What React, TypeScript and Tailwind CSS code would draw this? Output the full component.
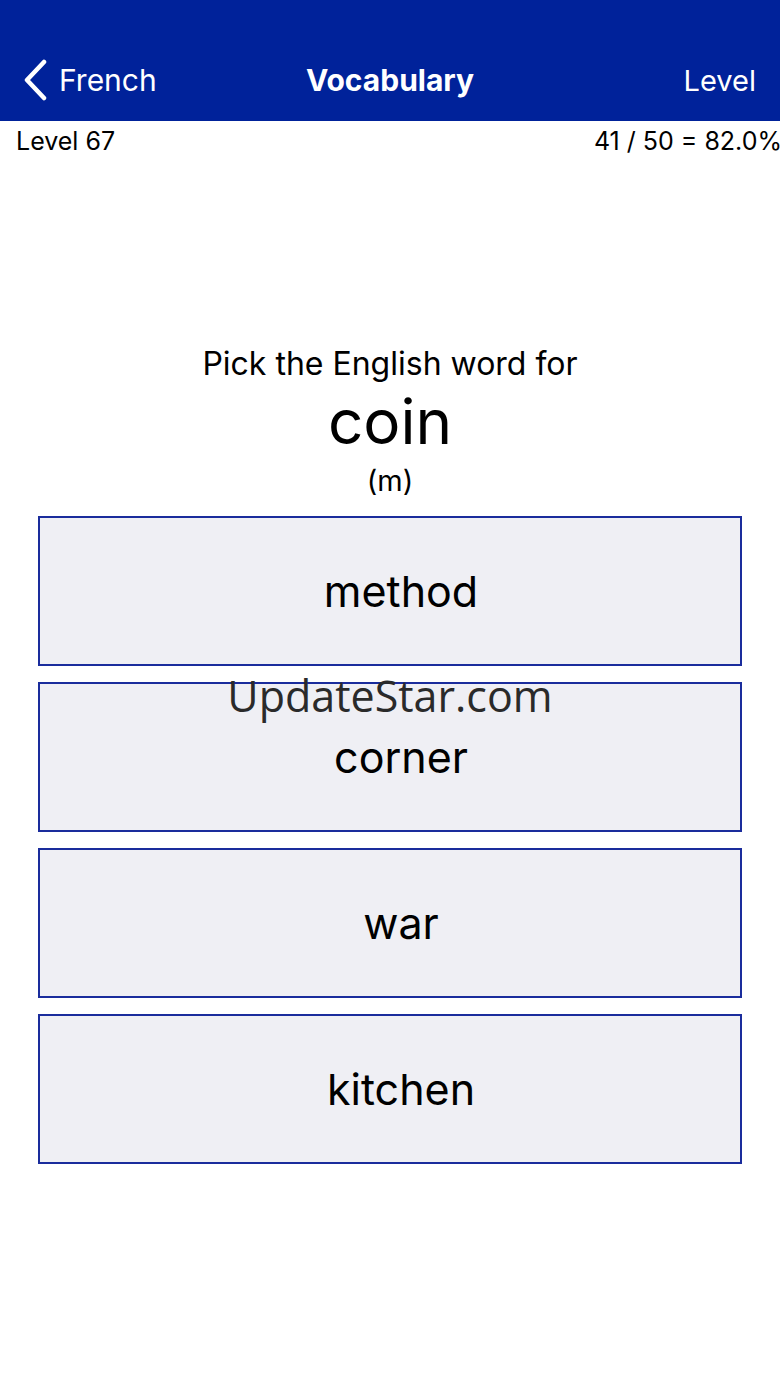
const options = ["method", "corner", "war", "kitchen"];

const App = () => {
  return (
    <div
      className="relative min-h-[1387px] w-[780px] bg-white text-black"
      style={{ fontFamily: "Inter, Roboto, 'Liberation Sans', sans-serif" }}
    >
      {/* nav bar */}
      <div className="flex h-[121px] items-start bg-[#00229a] pt-[59px] text-white">
        <div className="flex h-[42px] w-[260px] items-center pl-[22px]">
          <svg width="28" height="42" viewBox="0 0 28 42" fill="none">
            <polyline
              points="22,3 5,21 22,39"
              stroke="white"
              strokeWidth="4.5"
              strokeLinecap="round"
              strokeLinejoin="round"
            />
          </svg>
          <span className="ml-[9px] text-[30px] leading-none">French</span>
        </div>
        <div className="flex h-[42px] flex-1 items-center justify-center text-[30px] font-bold leading-none">
          Vocabulary
        </div>
        <div className="flex h-[42px] w-[260px] items-center justify-end pr-[24px] text-[29px] leading-none">
          Level
        </div>
      </div>

      {/* status */}
      <div className="flex items-center justify-between pl-[16px] pt-[5px] text-[25px] leading-[30px]">
        <span>Level 67</span>
        <span className="-mr-[2px]">41 / 50 = 82.0%</span>
      </div>

      {/* prompt */}
      <div className="mt-[188px] flex flex-col items-center">
        <div className="text-[32px] leading-[40px]">Pick the English word for</div>
        <div className="mt-[2px] text-[62px] leading-[72px]">coin</div>
        <div className="mt-[3px] text-[29px] leading-[40px]">(m)</div>
      </div>

      {/* options */}
      <div className="mt-[15px] flex flex-col gap-[16px] px-[38px]">
        {options.map((o) => (
          <button
            key={o}
            className="flex h-[150px] w-[704px] items-center justify-center border-2 border-[#1a2c9c] bg-[#efeff4] pl-[22px] text-[43px]"
          >
            {o}
          </button>
        ))}
      </div>

      {/* watermark */}
      <div
        className="pointer-events-none absolute left-0 right-0 top-[671px] text-center text-[43px] leading-[50px] text-[#2a2a2a]"
        style={{ fontFamily: "'Open Sans', sans-serif" }}
      >
        UpdateStar.com
      </div>
    </div>
  );
};

export default App;
